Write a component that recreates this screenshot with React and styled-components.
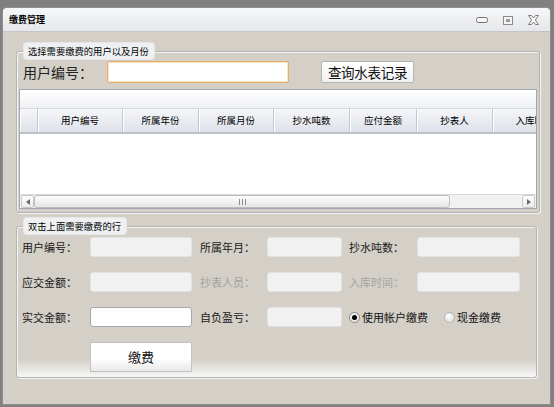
import React from 'react'
import styled, { createGlobalStyle } from 'styled-components'

const GlobalStyle = createGlobalStyle`
    html, body {
        margin: 0;
        padding: 0;
        background: #808080;
    }
    body {
        font-family: "Noto Sans CJK SC", "Noto Sans", sans-serif;
        color: #000;
    }
`

const columns = ['用户编号', '所属年份', '所属月份', '抄水吨数', '应付金额', '抄表人', '入库时间']

function TitleIcons() {
    return (
        <TitleButtons>
            <svg width="12" height="6" viewBox="0 0 12 6">
                <rect x="0.5" y="0.5" width="11" height="5" rx="2" fill="#f7f7f7" stroke="#6f6f6f" />
            </svg>
            <svg width="10" height="9" viewBox="0 0 10 9">
                <rect x="0.5" y="0.5" width="9" height="8" fill="#f4f4f4" stroke="#8a8a8a" />
                <rect x="3" y="3" width="4" height="3" fill="#9a9a9a" />
            </svg>
            <svg width="11" height="10" viewBox="0 0 11 10">
                <polygon
                    points="0.5,0.5 3.5,0.5 5.5,3 7.5,0.5 10.5,0.5 7.3,5 10.5,9.5 7.5,9.5 5.5,7 3.5,9.5 0.5,9.5 3.7,5"
                    fill="#fbfbfb"
                    stroke="#7a7a7a"
                    strokeWidth="1"
                />
            </svg>
        </TitleButtons>
    )
}

function DataGrid() {
    return (
        <Grid>
            <GroupBand />
            <HeaderRow>
                <HeaderCell />
                {columns.map((c) => (
                    <HeaderCell key={c}>{c}</HeaderCell>
                ))}
            </HeaderRow>
            <GridBody />
            <ScrollBar>
                <ArrowButton>
                    <svg width="4" height="6" viewBox="0 0 4 6">
                        <polygon points="4,0 0,3 4,6" fill="#6a6a6a" />
                    </svg>
                </ArrowButton>
                <Thumb>
                    <svg width="7" height="6" viewBox="0 0 7 6">
                        <rect x="0" y="0" width="1" height="6" fill="#8c8c8c" />
                        <rect x="3" y="0" width="1" height="6" fill="#8c8c8c" />
                        <rect x="6" y="0" width="1" height="6" fill="#8c8c8c" />
                    </svg>
                </Thumb>
                <Track />
                <ArrowButton>
                    <svg width="4" height="6" viewBox="0 0 4 6">
                        <polygon points="0,0 4,3 0,6" fill="#6a6a6a" />
                    </svg>
                </ArrowButton>
            </ScrollBar>
        </Grid>
    )
}

function App() {
    return (
        <>
            <GlobalStyle />
            <Window>
                <TitleBar>
                    <Title>缴费管理</Title>
                    <TitleIcons />
                </TitleBar>
                <Body>
                    <Group $width={524}>
                        <Legend>选择需要缴费的用户以及月份</Legend>
                        <SearchRow>
                            <BigLabel>用户编号：</BigLabel>
                            <SearchInput />
                            <QueryButton>查询水表记录</QueryButton>
                        </SearchRow>
                        <DataGrid />
                    </Group>
                    <Group $width={521} $bottomGlow $top={5}>
                        <Legend>双击上面需要缴费的行</Legend>
                        <FormGrid>
                            <FieldLabel>用户编号：</FieldLabel>
                            <Field $disabled />
                            <FieldLabel $pad={8}>所属年月：</FieldLabel>
                            <Field $disabled />
                            <FieldLabel $pad={7}>抄水吨数：</FieldLabel>
                            <Field $disabled />

                            <FieldLabel>应交金额：</FieldLabel>
                            <Field $disabled />
                            <FieldLabel $pad={8} $muted>抄表人员：</FieldLabel>
                            <Field $disabled />
                            <FieldLabel $pad={7} $muted>入库时间：</FieldLabel>
                            <Field $disabled />

                            <FieldLabel>实交金额：</FieldLabel>
                            <Field />
                            <FieldLabel $pad={8}>自负盈亏：</FieldLabel>
                            <Field $disabled />
                            <RadioGroup>
                                <RadioOption>
                                    <Radio $checked />
                                    使用帐户缴费
                                </RadioOption>
                                <RadioOption>
                                    <Radio />
                                    现金缴费
                                </RadioOption>
                            </RadioGroup>

                            <PayButton>缴费</PayButton>
                        </FormGrid>
                    </Group>
                </Body>
            </Window>
        </>
    )
}

export default App

const Window = styled.div`
    margin: 7px 0 0 2px;
    width: 549px;
    height: 398px;
    box-sizing: border-box;
    border: 1px solid #8e8e8e;
    border-radius: 5px 5px 0 0;
    background: #d4d0c8;
    display: flex;
    flex-direction: column;
    overflow: hidden;
`

const TitleBar = styled.div`
    height: 24px;
    flex: none;
    display: flex;
    align-items: center;
    justify-content: space-between;
    padding: 0 11px 0 6px;
    background: linear-gradient(#f6f7f8, #e5e7ea);
    border-bottom: 1px solid #c3c5c8;
    box-sizing: border-box;
`

const Title = styled.div`
    font-size: 9px;
    font-weight: bold;
    line-height: 24px;
    padding-top: 1px;
`

const TitleButtons = styled.div`
    display: flex;
    align-items: center;
    gap: 15px;
    padding-top: 1px;

    svg {
        display: block;
    }
`

const Body = styled.div`
    flex: 1;
    padding: 11px 0 0 13px;
    display: flex;
    flex-direction: column;
`

const Group = styled.fieldset`
    margin: ${(p) => p.$top || 0}px 0 0 0;
    padding: 2px 0 3px 0;
    width: ${(p) => p.$width}px;
    box-sizing: border-box;
    border: 1px solid #b3b3b3;
    border-radius: 3px;
    box-shadow: inset 1px 1px 0 #f6f6f6, 1px 1px 0 #f2f2f2;
    min-width: 0;
    background: ${(p) =>
        p.$bottomGlow
            ? 'linear-gradient(to bottom, transparent calc(100% - 18px), #f7f7f7 100%)'
            : 'transparent'};
`

const Legend = styled.legend`
    margin-left: 7px;
    padding: 0 5px 0 4px;
    height: 16px;
    line-height: 16px;
    font-size: 9.3px;
    background: #eef0f2;
    border-radius: 3px;
    box-shadow: 0 0 0 1px #e4e6e8;
`

const SearchRow = styled.div`
    display: flex;
    align-items: center;
    height: 22px;
    padding-left: 6px;
`

const BigLabel = styled.div`
    width: 84px;
    font-size: 14px;
    line-height: 22px;
    color: #222;
`

const SearchInput = styled.div`
    width: 182px;
    height: 22px;
    box-sizing: border-box;
    background: #fff;
    border: 1px solid #e9ac6b;
    border-radius: 2px;
    box-shadow: inset 0 0 0 1px #fbe3c6;
`

const QueryButton = styled.div`
    margin-left: 32px;
    width: 93px;
    height: 22px;
    box-sizing: border-box;
    border: 1px solid #b4b4b4;
    border-radius: 2px;
    background: linear-gradient(#ffffff, #f1f1f1);
    font-size: 13.5px;
    line-height: 20px;
    text-align: center;
    letter-spacing: -0.3px;
    color: #111;
`

const Grid = styled.div`
    margin: 6px 2px 0 2px;
    height: 120px;
    box-sizing: border-box;
    border: 1px solid #a3a8b0;
    background: #fff;
    display: flex;
    flex-direction: column;
    overflow: hidden;
`

const GroupBand = styled.div`
    height: 18px;
    flex: none;
    background: linear-gradient(#ffffff, #eef0f3);
    border-bottom: 1px solid #d5d8dd;
`

const HeaderRow = styled.div`
    height: 25px;
    flex: none;
    display: grid;
    grid-template-columns: 18px 85px 76px 75px 76px 67px 76px 84px;
    box-sizing: border-box;
    border-bottom: 2px solid #bcc1ca;
    background: linear-gradient(#f5f6f9, #dde1e8);
`

const HeaderCell = styled.div`
    border-right: 1px solid #c3c8d1;
    box-shadow: inset 1px 0 0 #ffffff;
    font-size: 9.5px;
    line-height: 23px;
    text-align: center;
    white-space: nowrap;
`

const GridBody = styled.div`
    flex: 1;
    background: #fff;
`

const ScrollBar = styled.div`
    height: 13px;
    flex: none;
    display: flex;
    background: #f1f1f1;
    border-top: 1px solid #d9d9d9;
    padding: 0 1px;
`

const ArrowButton = styled.div`
    width: 13px;
    box-sizing: border-box;
    border: 1px solid #c9c9c9;
    border-radius: 2px;
    background: linear-gradient(#ffffff, #ececec);
    display: flex;
    align-items: center;
    justify-content: center;
`

const Thumb = styled.div`
    width: 416px;
    box-sizing: border-box;
    border: 1px solid #bdbdbd;
    border-radius: 3px;
    background: linear-gradient(#fdfdfd, #e6e6e6);
    display: flex;
    align-items: center;
    justify-content: center;
`

const Track = styled.div`
    flex: 1;
`

const FormGrid = styled.div`
    display: grid;
    grid-template-columns: 68px 102px 75px 75px 75px 103px;
    grid-template-rows: 20px 20px 20px 30px;
    row-gap: 15px;
    padding: 1px 0 2px 5px;
    align-items: center;
`

const FieldLabel = styled.div`
    padding-left: ${(p) => p.$pad || 0}px;
    font-size: 11px;
    line-height: 20px;
    color: ${(p) => (p.$muted ? '#a3a3a3' : '#1a1a1a')};
    white-space: nowrap;
`

const Field = styled.div`
    height: 20px;
    box-sizing: border-box;
    border-radius: 3px;
    background: ${(p) => (p.$disabled ? '#f1f1f1' : '#ffffff')};
    border: 1px solid ${(p) => (p.$disabled ? '#e2e2e2' : '#a8a8a8')};
`

const RadioGroup = styled.div`
    grid-column: 5 / 7;
    display: flex;
    align-items: center;
    gap: 16px;
    padding-left: 7px;
`

const RadioOption = styled.div`
    display: flex;
    align-items: center;
    gap: 2px;
    font-size: 11px;
    color: #111;
    white-space: nowrap;
`

const Radio = styled.span`
    position: relative;
    width: 11px;
    height: 11px;
    box-sizing: border-box;
    border-radius: 50%;
    border: 1px solid ${(p) => (p.$checked ? '#8a8a8a' : '#b4b4b4')};
    background: radial-gradient(circle at 40% 35%, #ffffff, #d6d6d6);

    &::after {
        content: '';
        display: ${(p) => (p.$checked ? 'block' : 'none')};
        position: absolute;
        left: 2px;
        top: 2px;
        width: 5px;
        height: 5px;
        border-radius: 50%;
        background: #000;
    }
`

const PayButton = styled.div`
    grid-column: 2 / 3;
    align-self: end;
    margin-top: 5px;
    height: 30px;
    box-sizing: border-box;
    border: 1px solid #c2c2c2;
    background: linear-gradient(#ffffff 55%, #e9e9e9);
    font-size: 13px;
    line-height: 28px;
    text-align: center;
    color: #111;
`
